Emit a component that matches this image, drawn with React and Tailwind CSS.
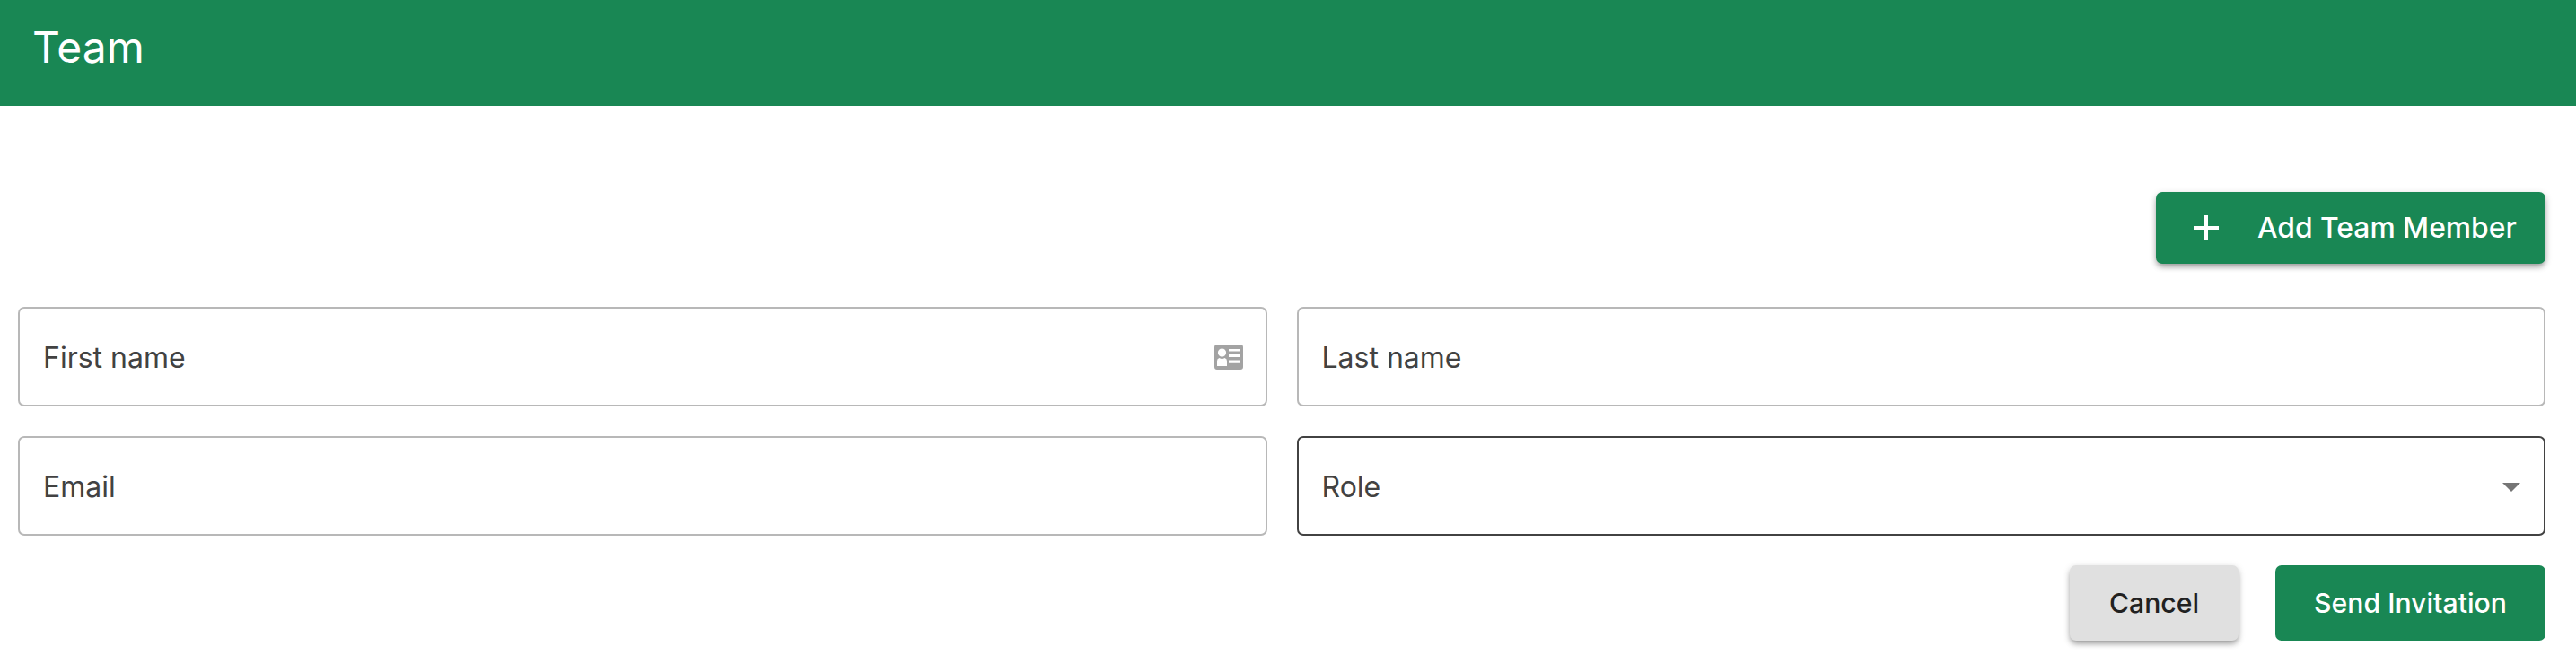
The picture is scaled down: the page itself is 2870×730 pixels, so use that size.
import React from "react";

function Field({ label, dark, children }) {
  return (
    <div className={`flex h-[111px] items-center justify-between rounded-[7px] border-2 bg-white pl-[26px] pr-[25px] ${dark ? "border-[#424242]" : "border-[#b8b8b8]"}`}>
      <span className="pt-[2px] text-[32px] leading-none text-[#424242]">{label}</span>
      {children}
    </div>
  );
}

function CardIcon() {
  return (
    <svg viewBox="0 0 32 28" className="h-[28px] w-[32px]">
      <path fill="#a3a3a3" fillRule="evenodd" d="M3 0h26a3 3 0 0 1 3 3v22a3 3 0 0 1-3 3H3a3 3 0 0 1-3-3V3a3 3 0 0 1 3-3zM16 5v2.6h13V5zM16 10.8v3.2h13v-3.2zM16 17.4v3.4h13v-3.4zM8.5 4.5a4.6 4.6 0 1 0 0 9.2 4.6 4.6 0 0 0 0-9.2zM5.5 15A3.5 3.5 0 0 0 3 18.5V24h11v-5.5A3.5 3.5 0 0 0 11.500 15c-1 .6-2 .9-3 .9s-2-.3-3-.9z" />
    </svg>
  );
}

export default function App() {
  return (
    <div className="min-h-[730px] bg-white font-['Inter',sans-serif]">
      <header className="h-[118px] bg-[#198754] pl-[36px] pt-[28.5px]">
        <h1 className="text-[48px] font-normal leading-none text-white">Team</h1>
      </header>
      <main className="pl-[20px] pr-[34px]">
        <div className="mt-[96px] flex justify-end">
          <button className="flex h-[80px] w-[434px] items-center rounded-[7px] bg-[#198754] pl-[32px] text-[31.8px] font-medium leading-none text-white shadow-[0_4px_6px_-1px_rgba(0,0,0,0.35),0_2px_10px_rgba(0,0,0,0.12)]">
            <svg viewBox="0 0 24 24" className="h-[48px] w-[48px] fill-white"><path d="M19 13h-6v6h-2v-6H5v-2h6V5h2v6h6v2z" /></svg>
            <span className="ml-[33px]">Add Team Member</span>
          </button>
        </div>
        <div className="mt-[48px] grid grid-cols-2 gap-x-[33px] gap-y-[33px]">
          <Field label="First name">
            <CardIcon />
          </Field>
          <Field label="Last name" />
          <Field label="Email" />
          <Field label="Role" dark>
            <svg viewBox="0 0 20 10" className="mr-[1px] mt-[2px] h-[10px] w-[20px] fill-[#757575]"><path d="M0 0h20L10 10z" /></svg>
          </Field>
        </div>
        <div className="mt-[33px] flex justify-end gap-[41px]">
          <button className="h-[84px] w-[188px] rounded-[7px] bg-[#e0e0e0] text-[30.2px] font-medium leading-none text-[#212121] shadow-[0_4px_6px_-1px_rgba(0,0,0,0.35),0_2px_10px_rgba(0,0,0,0.12)]">Cancel</button>
          <button className="h-[84px] w-[301px] rounded-[7px] bg-[#198754] text-[30.2px] font-medium leading-none text-white">Send Invitation</button>
        </div>
      </main>
    </div>
  );
}
